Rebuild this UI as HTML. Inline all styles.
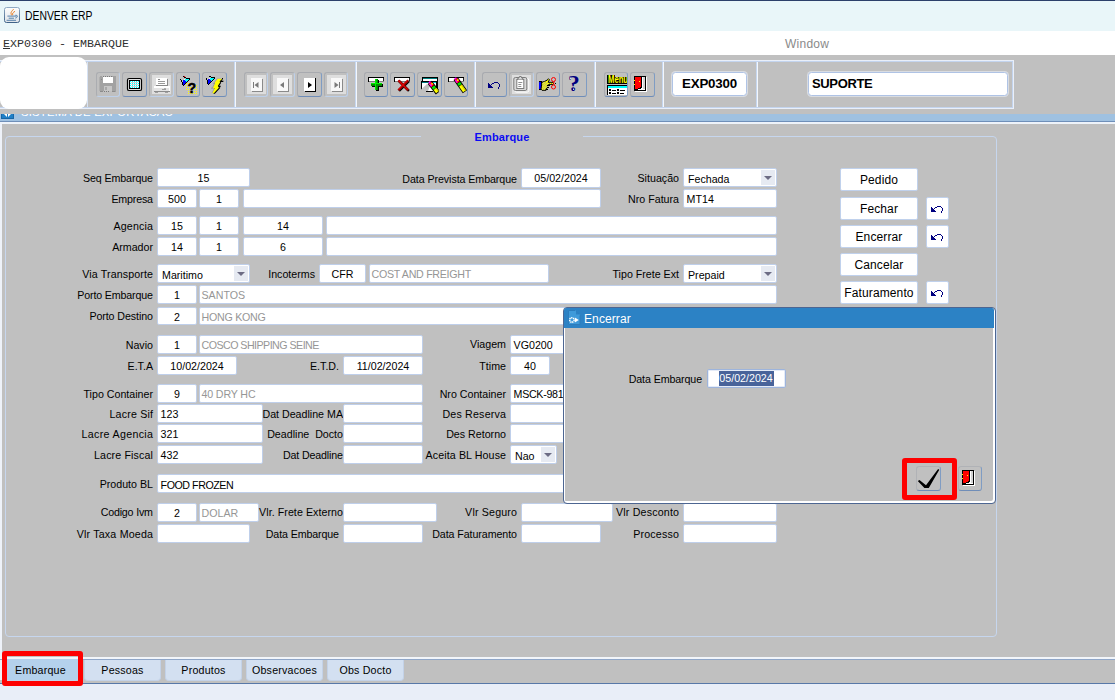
<!DOCTYPE html>
<html lang="pt-BR">
<head>
<meta charset="utf-8">
<title>DENVER ERP</title>
<style>
html,body{margin:0;padding:0}
body{width:1115px;height:700px;overflow:hidden;position:relative;background:#c0c0c0;font-family:"Liberation Sans",Arial,sans-serif;font-size:10.67px;color:#000}
div,span{box-sizing:border-box}
svg{display:block}
/* title + menu */
.titlebar{position:absolute;left:0;top:0;width:1115px;height:31px;background:#e9f6f9}
.tline{position:absolute;left:0;top:0;width:1115px;height:1px;background:#2c406b}
.jico{position:absolute;left:4px;top:7px}
.ttext{position:absolute;left:25px;top:9px;font-size:12px;line-height:15px;white-space:nowrap;display:inline-block;transform-origin:0 0;transform:scaleX(0.865)}
.menubar{position:absolute;left:0;top:31px;width:1115px;height:24px;background:#fff}
.mtext{position:absolute;left:3px;top:6px;font-family:"Liberation Mono","Courier New",monospace;font-size:11.67px;line-height:14px;white-space:nowrap;color:#303030}
.mtext{display:inline-block}
.mtext::first-letter{text-decoration:underline}
.mwin{position:absolute;left:785px;top:6px;font-size:12px;line-height:15px;color:#8a8a8a;letter-spacing:0.25px}
/* toolbar */
.toolbar{position:absolute;left:0;top:55px;width:1115px;height:59px}
.tbframe{position:absolute;left:-2px;top:6px;width:1015px;height:47px;border:1px solid #c3d4ee;box-shadow:0 0 0 1px #e9eff9}
.tbsep{position:absolute;top:7px;width:2px;height:45px;background:linear-gradient(to right,#c6d7f0 50%,#f3f7fc 50%)}
.tbl{position:absolute;left:87px;top:7px;width:1px;height:45px;background:#d6e2f4}
.blob{position:absolute;left:0;top:2px;width:87px;height:52px;background:#fff;border-radius:9px}
.tb{position:absolute;top:17px;width:24px;height:25px;border:1px solid;border-color:#a8aaaf #7f9cc3 #6f8db8 #a8aaaf;border-radius:3px}
.tb.dis{border-color:#abadb1 #bdd0ea #bdd0ea #abadb1}
.tb svg{position:absolute;left:2px;top:2px}
.tbfield{position:absolute;top:17px;height:24px;background:#fff;border:1px solid #afc3e5;border-radius:3.5px;box-shadow:0 0 0 1px rgba(236,242,251,0.55);white-space:nowrap;overflow:hidden}
.b1{font-weight:bold;font-size:13.33px;line-height:22px;letter-spacing:-0.2px}
.b2{font-weight:bold;font-size:13px;line-height:22px;padding-left:3px;letter-spacing:-0.35px}
/* mdi */
.mdistrip{position:absolute;left:0;top:114px;width:1115px;height:7px;background:#9fc1e1;overflow:hidden}
.mdiicon{position:absolute;left:1px;top:-8px}
.mditext{position:absolute;left:21px;top:-9px;color:#fff;font-size:11.3px;line-height:14px;white-space:nowrap;letter-spacing:0.2px}
.mdiline1{position:absolute;left:0;top:121px;width:1115px;height:1px;background:#6f8fb9}
.mdiline2{position:absolute;left:0;top:122px;width:1115px;height:2px;background:#eef3fa}
.leftedge{position:absolute;left:0;top:124px;width:2px;height:556px;background:#eef2f9}
/* frame */
.frame{position:absolute;left:5px;top:136px;width:992px;height:501px;border:1px solid #c6d6ee;border-radius:4px}
.framegap{position:absolute;left:421px;top:136px;width:162px;height:1px;background:#c0c0c0}
.legend{position:absolute;left:421px;top:130px;width:162px;text-align:center;color:#0a0af2;font-weight:bold;font-size:11px;line-height:14px;letter-spacing:0.15px}
/* form */
.l{position:absolute;left:0;text-align:right;height:19px;line-height:19px;padding-top:1px;white-space:nowrap}
.f{position:absolute;height:19px;background:#fff;border:1px solid #bfcfea;border-radius:2px;text-align:center;line-height:17px;padding-top:1px;white-space:nowrap;overflow:hidden}
.f.fl{text-align:left;padding-left:2.6px}
.f.fg{color:#969696;padding-left:1.5px}
.dd .ddt{position:absolute;left:4px;top:2px}
.dd .dda{position:absolute;right:1px;top:1px;width:14px;height:15px;background:#e6eaf2}
.dd .dda i{position:absolute;left:3px;top:6px;width:0;height:0;border-left:4px solid transparent;border-right:4px solid transparent;border-top:4px solid #6c6c84}
.btn{position:absolute;width:78px;height:23px;background:#fff;border:1px solid #c0d1ec;border-radius:2px;text-align:center;font-size:12px;line-height:23px;letter-spacing:0.12px;white-space:nowrap}
.ubtn{position:absolute;width:23px;height:23px;background:#fff;border:1px solid #c0d1ec;border-radius:2px}
.ubtn svg{position:absolute;left:3px;top:5px}
/* dialog */
.dlg{position:absolute;left:563px;top:307px;width:433px;height:197px;background:#c0c0c0;border:1px solid #4d6692;border-radius:4px;box-shadow:inset -1px -1px 0 1px #fff, inset 1px 0 0 0 #fff}
.dtitle{position:absolute;left:0;top:0;width:430px;height:20px;background:#2c82c5;border-radius:2px 2px 0 0}
.dicon{position:absolute;left:4px;top:2px}
.dtt{position:absolute;left:20px;top:4px;color:#fff;font-size:12px;line-height:15px;letter-spacing:0.1px}
.dl{position:absolute;left:0;top:61px;width:138px;text-align:right;height:19px;line-height:19px;padding-top:1px;white-space:nowrap;letter-spacing:-0.1px}
.dfield{left:143px;top:61px;width:79px;height:19px;border-color:#9db4dc;padding-top:0;box-shadow:inset 0 0 0 1px #e4ebf7}
.sel{display:inline-block;background:#48639a;color:#fff;height:15px;line-height:15px;margin-top:1px;vertical-align:top;padding:0 1px 0 0}
.db{position:absolute;top:158px;width:24px;height:25px;border:1px solid;border-color:#b0b2b6 #7f9cc3 #6f8db8 #b0b2b6;border-radius:3px}
.db svg{position:absolute;left:2px;top:2px}
.red{position:absolute;border:5px solid #fe0000;border-radius:3px;box-sizing:content-box}
/* tabs */
.tabwhite{position:absolute;left:0;top:657px;width:1115px;height:3px;background:#f2f5fa;border-bottom:1px solid #8fa6c8}
.tabline{position:absolute;left:0;top:683px;width:1115px;height:1px;background:#5878a8}
.status{position:absolute;left:0;top:684px;width:1115px;height:16px;background:#e9eef8}
.tab{position:absolute;top:660px;width:77px;height:21px;background:#d3e0f1;border-radius:0 0 4px 4px;text-align:center;line-height:21px;letter-spacing:0.2px;border:1px solid #c3d2e8;border-top:none}
.tab.tsel{background:#b4d1ec;top:659px;height:22px;line-height:23px}
</style>
</head>
<body>
<div class="titlebar"><div class="tline"></div><svg class="jico" width="16" height="16" viewBox="0 0 16 16"><defs><linearGradient id="jg" x1="0" y1="0" x2="0" y2="1"><stop offset="0" stop-color="#fdfdfd"/><stop offset="1" stop-color="#dde2e8"/></linearGradient><linearGradient id="jb" x1="0" y1="0" x2="0" y2="1"><stop offset="0" stop-color="#8fa9c4"/><stop offset="1" stop-color="#3f6288"/></linearGradient></defs><rect x="0.5" y="0.5" width="15" height="15" rx="2" fill="url(#jg)" stroke="url(#jb)"/><path d="M9.4 2.4C7.6 4.4 5.9 5.8 7.7 8.2M10.7 4.5C9 5.5 8.1 6.4 8.6 7.6" fill="none" stroke="#e87a1c" stroke-width="0.95" stroke-linecap="round"/><path d="M3.8 9.1h8.4M5.1 11.2h4.5M3 13.3h8.6" fill="none" stroke="#4f7ca8" stroke-width="0.95" stroke-linecap="round"/><path d="M11.4 8.2c2.6-0.4 2.8 2.2-0.1 2.9" fill="none" stroke="#4f7ca8" stroke-width="0.95"/></svg><span class="ttext">DENVER ERP</span></div>
<div class="menubar"><span class="mtext">EXP0300 - EMBARQUE</span><span class="mwin">Window</span></div>
<div class="toolbar">
<div class="tbframe"></div>
<div class="tbsep" style="left:234px"></div>
<div class="tbsep" style="left:355px"></div>
<div class="tbsep" style="left:474px"></div>
<div class="tbsep" style="left:594px"></div>
<div class="tbsep" style="left:662px"></div>
<div class="tbsep" style="left:756px"></div>
<div class="tbl"></div><div class="blob"></div>
<div class="tb dis" style="left:96px;width:24px"><svg width="19" height="20" viewBox="0 0 19 20" shape-rendering="crispEdges"><rect x="1" y="1" width="16" height="16" fill="#a2a2a2"/><rect x="0" y="2" width="1" height="14" fill="#b0b0b0"/><rect x="4" y="2" width="10" height="6" fill="#fff"/><rect x="5" y="11" width="8" height="6" fill="#c6c6c6"/><rect x="6" y="12" width="2" height="3" fill="#a8a8a8"/><rect x="4" y="1" width="1" height="1" fill="#7c7c7c"/><rect x="6" y="1" width="1" height="1" fill="#7c7c7c"/><rect x="8" y="1" width="1" height="1" fill="#7c7c7c"/><rect x="10" y="1" width="1" height="1" fill="#7c7c7c"/><rect x="12" y="1" width="1" height="1" fill="#7c7c7c"/><rect x="3" y="1" width="1" height="1" fill="#c0c0c0"/><rect x="5" y="1" width="1" height="1" fill="#c0c0c0"/><rect x="7" y="1" width="1" height="1" fill="#c0c0c0"/><rect x="9" y="1" width="1" height="1" fill="#c0c0c0"/><rect x="11" y="1" width="1" height="1" fill="#c0c0c0"/><rect x="1" y="16" width="3" height="1" fill="#8c8c8c"/><rect x="13" y="16" width="3" height="1" fill="#8c8c8c"/><rect x="5" y="16" width="1" height="1" fill="#7c7c7c"/><rect x="7" y="16" width="1" height="1" fill="#7c7c7c"/><rect x="9" y="16" width="1" height="1" fill="#7c7c7c"/><rect x="4" y="16" width="1" height="1" fill="#c0c0c0"/><rect x="6" y="16" width="1" height="1" fill="#c0c0c0"/><rect x="8" y="16" width="1" height="1" fill="#c0c0c0"/><rect x="10" y="16" width="1" height="1" fill="#c0c0c0"/><rect x="11" y="16" width="1" height="1" fill="#c0c0c0"/><rect x="12" y="16" width="1" height="1" fill="#c0c0c0"/><rect x="2" y="4" width="1" height="1" fill="#888"/></svg></div>
<div class="tb " style="left:122px;width:25px"><svg width="19" height="20" viewBox="0 0 19 20" shape-rendering="crispEdges"><rect shape-rendering="auto" x="2.5" y="3.5" width="14" height="12" rx="1.6" fill="#e4e4e4" stroke="#000" stroke-width="1.2"/><rect x="4" y="5" width="11" height="9" fill="#000"/><rect x="5" y="6" width="1" height="1" fill="#00ffff"/><rect x="6" y="6" width="1" height="1" fill="#f0ffff"/><rect x="7" y="6" width="1" height="1" fill="#00ffff"/><rect x="8" y="6" width="1" height="1" fill="#f0ffff"/><rect x="9" y="6" width="1" height="1" fill="#00ffff"/><rect x="10" y="6" width="1" height="1" fill="#f0ffff"/><rect x="11" y="6" width="1" height="1" fill="#00ffff"/><rect x="12" y="6" width="1" height="1" fill="#f0ffff"/><rect x="13" y="6" width="1" height="1" fill="#00ffff"/><rect x="5" y="7" width="1" height="1" fill="#f0ffff"/><rect x="6" y="7" width="1" height="1" fill="#00ffff"/><rect x="7" y="7" width="1" height="1" fill="#f0ffff"/><rect x="8" y="7" width="1" height="1" fill="#00ffff"/><rect x="9" y="7" width="1" height="1" fill="#f0ffff"/><rect x="10" y="7" width="1" height="1" fill="#00ffff"/><rect x="11" y="7" width="1" height="1" fill="#f0ffff"/><rect x="12" y="7" width="1" height="1" fill="#00ffff"/><rect x="13" y="7" width="1" height="1" fill="#f0ffff"/><rect x="5" y="8" width="1" height="1" fill="#00ffff"/><rect x="6" y="8" width="1" height="1" fill="#f0ffff"/><rect x="7" y="8" width="1" height="1" fill="#00ffff"/><rect x="8" y="8" width="1" height="1" fill="#f0ffff"/><rect x="9" y="8" width="1" height="1" fill="#00ffff"/><rect x="10" y="8" width="1" height="1" fill="#f0ffff"/><rect x="11" y="8" width="1" height="1" fill="#00ffff"/><rect x="12" y="8" width="1" height="1" fill="#f0ffff"/><rect x="13" y="8" width="1" height="1" fill="#00ffff"/><rect x="5" y="9" width="1" height="1" fill="#f0ffff"/><rect x="6" y="9" width="1" height="1" fill="#00ffff"/><rect x="7" y="9" width="1" height="1" fill="#f0ffff"/><rect x="8" y="9" width="1" height="1" fill="#00ffff"/><rect x="9" y="9" width="1" height="1" fill="#f0ffff"/><rect x="10" y="9" width="1" height="1" fill="#00ffff"/><rect x="11" y="9" width="1" height="1" fill="#f0ffff"/><rect x="12" y="9" width="1" height="1" fill="#00ffff"/><rect x="13" y="9" width="1" height="1" fill="#f0ffff"/><rect x="5" y="10" width="1" height="1" fill="#00ffff"/><rect x="6" y="10" width="1" height="1" fill="#f0ffff"/><rect x="7" y="10" width="1" height="1" fill="#00ffff"/><rect x="8" y="10" width="1" height="1" fill="#f0ffff"/><rect x="9" y="10" width="1" height="1" fill="#00ffff"/><rect x="10" y="10" width="1" height="1" fill="#f0ffff"/><rect x="11" y="10" width="1" height="1" fill="#00ffff"/><rect x="12" y="10" width="1" height="1" fill="#f0ffff"/><rect x="13" y="10" width="1" height="1" fill="#00ffff"/><rect x="5" y="11" width="1" height="1" fill="#f0ffff"/><rect x="6" y="11" width="1" height="1" fill="#00ffff"/><rect x="7" y="11" width="1" height="1" fill="#f0ffff"/><rect x="8" y="11" width="1" height="1" fill="#00ffff"/><rect x="9" y="11" width="1" height="1" fill="#f0ffff"/><rect x="10" y="11" width="1" height="1" fill="#00ffff"/><rect x="11" y="11" width="1" height="1" fill="#f0ffff"/><rect x="12" y="11" width="1" height="1" fill="#00ffff"/><rect x="13" y="11" width="1" height="1" fill="#f0ffff"/><rect x="5" y="12" width="1" height="1" fill="#00ffff"/><rect x="6" y="12" width="1" height="1" fill="#f0ffff"/><rect x="7" y="12" width="1" height="1" fill="#00ffff"/><rect x="8" y="12" width="1" height="1" fill="#f0ffff"/><rect x="9" y="12" width="1" height="1" fill="#00ffff"/><rect x="10" y="12" width="1" height="1" fill="#f0ffff"/><rect x="11" y="12" width="1" height="1" fill="#00ffff"/><rect x="12" y="12" width="1" height="1" fill="#f0ffff"/><rect x="13" y="12" width="1" height="1" fill="#00ffff"/><rect x="6" y="7" width="7" height="1" fill="#d4d4d4"/><rect x="6" y="9" width="7" height="1" fill="#d4d4d4"/><rect x="6" y="11" width="7" height="1" fill="#d4d4d4"/></svg></div>
<div class="tb dis" style="left:149px;width:25px"><svg width="19" height="20" viewBox="0 0 19 20" shape-rendering="crispEdges"><rect x="0" y="0" width="19" height="19" fill="#dedede"/><rect x="4" y="3" width="11" height="7" fill="#fff"/><rect x="15" y="4" width="1" height="7" fill="#8a8a8a"/><rect x="4" y="10" width="12" height="1" fill="#8a8a8a"/><rect x="6" y="4" width="2" height="1" fill="#8a8a8a"/><rect x="6" y="6" width="7" height="1" fill="#9a9a9a"/><rect x="6" y="8" width="7" height="1" fill="#9a9a9a"/><rect x="2" y="11" width="16" height="2" fill="#fff"/><rect x="2" y="13" width="15" height="3" fill="#e4e4e4"/><rect x="17" y="12" width="1" height="4" fill="#fff"/><rect x="10" y="14" width="4" height="1" fill="#9c9c9c"/><rect x="12" y="13" width="2" height="1" fill="#b0b0b0"/><rect x="2" y="16" width="16" height="1" fill="#8c8c8c"/><rect x="3" y="17" width="3" height="1" fill="#a0a0a0"/><rect x="13" y="17" width="3" height="1" fill="#a0a0a0"/></svg></div>
<div class="tb " style="left:176px;width:24px"><svg width="19" height="20" viewBox="0 0 19 20" shape-rendering="crispEdges"><rect x="7" y="8" width="1" height="1" fill="#ffff00"/><rect x="9" y="8" width="1" height="1" fill="#ffff00"/><rect x="7" y="10" width="1" height="1" fill="#ffff00"/><rect x="17" y="10" width="1" height="1" fill="#ffff00"/><rect x="7" y="12" width="1" height="1" fill="#ffff00"/><rect x="9" y="12" width="1" height="1" fill="#ffff00"/><rect x="11" y="12" width="1" height="1" fill="#ffff00"/><rect x="15" y="12" width="1" height="1" fill="#ffff00"/><rect x="17" y="12" width="1" height="1" fill="#ffff00"/><rect x="7" y="14" width="1" height="1" fill="#ffff00"/><rect x="9" y="14" width="1" height="1" fill="#ffff00"/><rect x="15" y="14" width="1" height="1" fill="#ffff00"/><rect x="17" y="14" width="1" height="1" fill="#ffff00"/><rect x="9" y="16" width="1" height="1" fill="#ffff00"/><rect x="15" y="16" width="1" height="1" fill="#ffff00"/><rect x="17" y="16" width="1" height="1" fill="#ffff00"/><rect x="9" y="18" width="1" height="1" fill="#ffff00"/><rect x="11" y="18" width="1" height="1" fill="#ffff00"/><rect x="13" y="18" width="1" height="1" fill="#ffff00"/><rect x="15" y="18" width="1" height="1" fill="#ffff00"/><rect x="17" y="18" width="1" height="1" fill="#ffff00"/><rect x="4" y="1" width="1" height="1" fill="#000"/><rect x="5" y="1" width="1" height="1" fill="#ff0000"/><rect x="5" y="2" width="2" height="1" fill="#000"/><rect x="7" y="3" width="4" height="1" fill="#000"/><rect x="1" y="4" width="1" height="1" fill="#000"/><rect x="5" y="4" width="1" height="1" fill="#f4f4f4"/><rect x="6" y="4" width="4" height="1" fill="#00ffff"/><rect x="10" y="4" width="1" height="1" fill="#000"/><rect x="2" y="5" width="1" height="1" fill="#000"/><rect x="4" y="5" width="2" height="1" fill="#0000ff"/><rect x="6" y="5" width="3" height="1" fill="#00ffff"/><rect x="9" y="5" width="1" height="1" fill="#000"/><rect x="2" y="6" width="1" height="1" fill="#000"/><rect x="4" y="6" width="3" height="1" fill="#0000ff"/><rect x="7" y="6" width="1" height="1" fill="#00ffff"/><rect x="8" y="6" width="1" height="1" fill="#000"/><rect x="3" y="7" width="1" height="1" fill="#000"/><rect x="4" y="7" width="3" height="1" fill="#0000ff"/><rect x="7" y="7" width="1" height="1" fill="#000"/><rect x="3" y="8" width="1" height="1" fill="#000"/><rect x="4" y="8" width="2" height="1" fill="#0000ff"/><rect x="6" y="8" width="1" height="1" fill="#000"/><rect x="3" y="9" width="1" height="1" fill="#000"/><rect x="4" y="9" width="1" height="1" fill="#0000ff"/><rect x="5" y="9" width="1" height="1" fill="#000"/><rect x="4" y="10" width="1" height="1" fill="#000"/><text shape-rendering="auto" x="8.6" y="18" font-family="Liberation Sans,Arial,sans-serif" font-weight="bold" font-size="14.2" fill="#000" stroke="#000" stroke-width="0.45">?</text></svg></div>
<div class="tb " style="left:202px;width:25px"><svg width="19" height="20" viewBox="0 0 19 20" shape-rendering="crispEdges"><g transform="translate(1,0)"><rect x="3" y="1" width="2" height="1" fill="#000"/><rect x="5" y="2" width="4" height="1" fill="#000"/><rect x="0" y="3" width="1" height="1" fill="#000"/><rect x="3" y="3" width="1" height="1" fill="#f4f4f4"/><rect x="4" y="3" width="4" height="1" fill="#00ffff"/><rect x="8" y="3" width="1" height="1" fill="#000"/><rect x="0" y="4" width="1" height="1" fill="#000"/><rect x="2" y="4" width="2" height="1" fill="#0000ff"/><rect x="4" y="4" width="3" height="1" fill="#00ffff"/><rect x="7" y="4" width="1" height="1" fill="#000"/><rect x="1" y="5" width="1" height="1" fill="#000"/><rect x="2" y="5" width="3" height="1" fill="#0000ff"/><rect x="5" y="5" width="1" height="1" fill="#00ffff"/><rect x="6" y="5" width="1" height="1" fill="#000"/><rect x="1" y="6" width="1" height="1" fill="#000"/><rect x="2" y="6" width="3" height="1" fill="#0000ff"/><rect x="5" y="6" width="1" height="1" fill="#000"/><rect x="1" y="7" width="1" height="1" fill="#000"/><rect x="2" y="7" width="2" height="1" fill="#0000ff"/><rect x="4" y="7" width="1" height="1" fill="#000"/><rect x="1" y="8" width="1" height="1" fill="#000"/><rect x="2" y="8" width="1" height="1" fill="#0000ff"/><rect x="3" y="8" width="1" height="1" fill="#000"/><rect x="2" y="9" width="1" height="1" fill="#000"/><g shape-rendering="auto"><polygon points="11.7,3.7 16.0,3.7 13.6,6.4 14.2,7.2 11.8,11.0 13.2,12.6 7.9,18.3 6.3,18.3 8.7,13.6 6.9,13.0 9.1,8.2 8.6,7.6" fill="#9a9aa8" transform="translate(-0.8,-0.2)"/><polygon points="11.7,3.7 16.0,3.7 13.6,6.4 14.2,7.2 11.8,11.0 13.2,12.6 7.9,18.3 6.3,18.3 8.7,13.6 6.9,13.0 9.1,8.2 8.6,7.6" fill="#000" transform="translate(1,0.5)"/><polygon points="11.7,3.7 16.0,3.7 13.6,6.4 14.2,7.2 11.8,11.0 13.2,12.6 7.9,18.3 6.3,18.3 8.7,13.6 6.9,13.0 9.1,8.2 8.6,7.6" fill="#ffff00"/><path d="M6.9 8.4h2.1M5 13.2h2.2" stroke="#909090" stroke-width="0.8"/><path d="M14 7h3.2l0.4-1.2h-2.6zM12.2 12.2h2.2l0.4-1.4h-1.8z" fill="#000"/></g><rect x="16" y="3" width="1" height="1" fill="#000"/></g></svg></div>
<div class="tb dis" style="left:244px;width:24px"><svg width="19" height="20" viewBox="0 0 19 20" shape-rendering="crispEdges"><rect x="0" y="0" width="19" height="19" fill="#dedede"/><rect x="4" y="3" width="11" height="13" fill="#f8f8f8"/><rect x="15" y="4" width="1" height="13" fill="#8a8a8a"/><rect x="5" y="16" width="11" height="1" fill="#8a8a8a"/><rect x="6" y="7" width="1" height="6" fill="#7a7a7a"/><path d="M11.5 7v6l-4-3z" fill="#7a7a7a" shape-rendering="auto"/></svg></div>
<div class="tb dis" style="left:270px;width:25px"><svg width="19" height="20" viewBox="0 0 19 20" shape-rendering="crispEdges"><rect x="0" y="0" width="19" height="19" fill="#dedede"/><rect x="4" y="3" width="11" height="13" fill="#f8f8f8"/><rect x="15" y="4" width="1" height="13" fill="#8a8a8a"/><rect x="5" y="16" width="11" height="1" fill="#8a8a8a"/><path d="M11 7v6l-4-3z" fill="#7a7a7a" shape-rendering="auto"/></svg></div>
<div class="tb " style="left:297px;width:25px"><svg width="19" height="20" viewBox="0 0 19 20" shape-rendering="crispEdges"><rect x="4" y="3" width="11" height="13" fill="#fff"/><rect x="15" y="4" width="1" height="13" fill="#000"/><rect x="5" y="16" width="11" height="1" fill="#000"/><rect x="15" y="3" width="1" height="1" fill="#000"/><path d="M8 7v6l4-3z" fill="#000" shape-rendering="auto"/></svg></div>
<div class="tb dis" style="left:324px;width:24px"><svg width="19" height="20" viewBox="0 0 19 20" shape-rendering="crispEdges"><rect x="0" y="0" width="19" height="19" fill="#dedede"/><rect x="4" y="3" width="11" height="13" fill="#f8f8f8"/><rect x="15" y="4" width="1" height="13" fill="#8a8a8a"/><rect x="5" y="16" width="11" height="1" fill="#8a8a8a"/><path d="M7.5 7v6l4-3z" fill="#7a7a7a" shape-rendering="auto"/><rect x="12" y="7" width="1" height="6" fill="#7a7a7a"/></svg></div>
<div class="tb " style="left:364px;width:24px"><svg width="19" height="20" viewBox="0 0 19 20" shape-rendering="crispEdges"><rect x="1" y="2" width="16" height="1" fill="#000"/><rect x="1" y="2" width="1" height="5" fill="#000"/><rect x="16" y="3" width="1" height="3" fill="#202020"/><rect x="2" y="3" width="14" height="3" fill="#fff"/><rect x="2" y="6" width="15" height="1" fill="#808080"/><rect x="9" y="5" width="3" height="11" fill="#000"/><rect x="5" y="9" width="11" height="3" fill="#000"/><rect x="8" y="4" width="3" height="11" fill="#008c00"/><rect x="4" y="8" width="11" height="3" fill="#008c00"/><rect x="8" y="4" width="1" height="11" fill="#00f000"/><rect x="4" y="8" width="11" height="1" fill="#00f000"/><rect x="9" y="4" width="1" height="4" fill="#00c000"/><rect x="9" y="11" width="1" height="4" fill="#00a000"/></svg></div>
<div class="tb " style="left:390px;width:25px"><svg width="19" height="20" viewBox="0 0 19 20" shape-rendering="crispEdges"><rect x="1" y="2" width="16" height="1" fill="#000"/><rect x="1" y="2" width="1" height="5" fill="#000"/><rect x="16" y="3" width="1" height="3" fill="#202020"/><rect x="2" y="3" width="14" height="3" fill="#fff"/><rect x="2" y="6" width="15" height="1" fill="#808080"/><g shape-rendering="auto" fill="none" stroke-linecap="square"><path d="M6.9 6.9l8.2 8.2M15.1 6.9l-8.2 8.2" stroke="#000" stroke-width="2.4"/><path d="M6.2 6.2l8.2 8.2M14.4 6.2l-8.2 8.2" stroke="#a00000" stroke-width="2.4"/><path d="M5.8 5.9l8.2 8.2M14 5.9l-8.2 8.2" stroke="#f00000" stroke-width="0.9"/></g></svg></div>
<div class="tb " style="left:417px;width:25px"><svg width="19" height="20" viewBox="0 0 19 20" shape-rendering="crispEdges"><rect x="2" y="2" width="16" height="15" fill="#000"/><rect x="3" y="3" width="14" height="13" fill="#fff"/><rect x="3" y="3" width="14" height="1" fill="#008080"/><rect x="1" y="6" width="15" height="10" fill="#000"/><rect x="2" y="7" width="14" height="9" fill="#fff"/><rect x="2" y="7" width="8" height="1" fill="#008080"/><rect x="10" y="7" width="6" height="1" fill="#00d8d8"/><rect x="16" y="6" width="1" height="10" fill="#000"/><path d="M1 16l0-1.4l6-5.6l3 2l-2 5z" fill="#c0c0c0" shape-rendering="auto"/><rect x="1" y="15" width="6" height="1" fill="#c0c0c0"/><rect x="1" y="16" width="17" height="1" fill="#c0c0c0"/><rect x="13" y="15" width="5" height="1" fill="#c0c0c0"/><rect x="6" y="16" width="7" height="1" fill="#000"/><g shape-rendering="auto" transform="translate(9.4,6.9) rotate(52)"><rect x="0.6" y="-2.6" width="13.2" height="5.2" fill="#000"/><rect x="-0.4" y="-1.1" width="1.8" height="2.2" fill="#ff00ff"/><rect x="1.2" y="-1.7" width="4.2" height="3.4" fill="#ff0000"/><rect x="2.4" y="-1.7" width="1.5" height="1.7" fill="#ffff00"/><rect x="1.6" y="0.2" width="3.2" height="1.5" fill="#ff00ff"/><rect x="5.8" y="-1.7" width="2.7" height="3.4" fill="#00e800"/><rect x="9" y="-1.7" width="4.0" height="3.4" fill="#ffff00"/><rect x="9" y="-1.7" width="4.0" height="1.1" fill="#d0d000"/></g></svg></div>
<div class="tb " style="left:444px;width:24px"><svg width="21" height="21" viewBox="0 0 21 21" shape-rendering="crispEdges"><rect x="1" y="2" width="16" height="1" fill="#000"/><rect x="1" y="2" width="1" height="5" fill="#000"/><rect x="16" y="3" width="1" height="3" fill="#202020"/><rect x="2" y="3" width="14" height="3" fill="#fff"/><rect x="2" y="6" width="15" height="1" fill="#808080"/><g shape-rendering="auto" transform="translate(8.3,3.1) rotate(55)"><rect x="0.6" y="-2.6" width="16.200000000000003" height="5.2" fill="#000"/><rect x="-0.4" y="-1.1" width="1.8" height="2.2" fill="#ff00ff"/><rect x="1.2" y="-1.7" width="4.2" height="3.4" fill="#ff0000"/><rect x="2.4" y="-1.7" width="1.5" height="1.7" fill="#ffff00"/><rect x="1.6" y="0.2" width="3.2" height="1.5" fill="#ff00ff"/><rect x="5.8" y="-1.7" width="2.7" height="3.4" fill="#00e800"/><rect x="9" y="-1.7" width="7.000000000000002" height="3.4" fill="#ffff00"/><rect x="9" y="-1.7" width="7.000000000000002" height="1.1" fill="#d0d000"/></g></svg></div>
<div class="tb " style="left:482px;width:25px"><svg width="19" height="20" viewBox="0 0 19 20" shape-rendering="crispEdges"><rect x="9" y="7" width="4" height="1" fill="#000080"/><rect x="3" y="8" width="1" height="1" fill="#000080"/><rect x="7" y="8" width="2" height="1" fill="#000080"/><rect x="13" y="8" width="1" height="1" fill="#000080"/><rect x="3" y="9" width="2" height="1" fill="#000080"/><rect x="6" y="9" width="1" height="1" fill="#000080"/><rect x="14" y="9" width="1" height="1" fill="#000080"/><rect x="3" y="10" width="3" height="1" fill="#000080"/><rect x="14" y="10" width="1" height="1" fill="#000080"/><rect x="3" y="11" width="4" height="1" fill="#000080"/><rect x="14" y="11" width="1" height="1" fill="#000080"/><rect x="3" y="12" width="5" height="1" fill="#000080"/><rect x="13" y="12" width="1" height="1" fill="#000080"/><rect x="13" y="13" width="1" height="1" fill="#000080"/></svg></div>
<div class="tb dis" style="left:509px;width:25px"><svg width="19" height="20" viewBox="0 0 19 20" shape-rendering="crispEdges"><rect x="0" y="0" width="19" height="19" fill="#dedede"/><g shape-rendering="auto" transform="translate(-0.7,-1)"><rect x="2.5" y="3.5" width="14" height="13.6" rx="1.6" fill="none" stroke="#fff" stroke-width="1" transform="translate(1,1)"/><rect x="2.5" y="3.5" width="13" height="13" rx="1.6" fill="#d8d8d8" stroke="#7c7c7c" stroke-width="1"/><rect x="5.5" y="5.5" width="7" height="9" fill="#fff" stroke="#7c7c7c" stroke-width="1"/><path d="M6.6 5.4v-1.4h1l0.5-1.5h1.8l0.5 1.5h1v1.4" fill="#d8d8d8" stroke="#7c7c7c" stroke-width="1"/><path d="M7 8.5h4M7 10.5h3M7 12.5h3" stroke="#909090" stroke-width="1"/></g></svg></div>
<div class="tb " style="left:536px;width:24px"><svg width="19" height="20" viewBox="0 0 19 20" shape-rendering="crispEdges"><g shape-rendering="auto"><circle cx="14.5" cy="4.5" r="2" fill="none" stroke="#ff0000" stroke-width="1"/><circle cx="14.5" cy="12" r="2" fill="none" stroke="#ff0000" stroke-width="1"/><path d="M13.4 6.4l2.2 3.8M15.6 6.4l-2.2 3.8" stroke="#ff0000" stroke-width="0.9" fill="none"/></g><rect x="0" y="6" width="3" height="9" fill="#000"/><rect x="0" y="7" width="2" height="7" fill="#0000ff"/><path shape-rendering="auto" d="M3 7.2l2.6-0.8l2.4-1.2l1.5-1.4l0.9 0.9l-1.2 2.6h4.6v2.1h-4.2v1.3h-1.1v1.5h-0.8v1.5h-0.7v1.6h-4l-1-1.2z" fill="#ffff00" stroke="#000" stroke-width="1"/><rect x="4" y="7" width="1" height="1" fill="#b8b870"/><rect x="6" y="7" width="1" height="1" fill="#b8b870"/><rect x="8" y="7" width="1" height="1" fill="#b8b870"/><rect x="3" y="8" width="1" height="1" fill="#b8b870"/><rect x="5" y="8" width="1" height="1" fill="#b8b870"/><rect x="7" y="8" width="1" height="1" fill="#b8b870"/><rect x="4" y="9" width="1" height="1" fill="#b8b870"/><rect x="6" y="9" width="1" height="1" fill="#b8b870"/><rect x="8" y="9" width="1" height="1" fill="#b8b870"/><rect x="3" y="10" width="1" height="1" fill="#b8b870"/><rect x="5" y="10" width="1" height="1" fill="#b8b870"/><rect x="7" y="10" width="1" height="1" fill="#b8b870"/><rect x="4" y="11" width="1" height="1" fill="#b8b870"/><rect x="6" y="11" width="1" height="1" fill="#b8b870"/><rect x="8" y="11" width="1" height="1" fill="#b8b870"/><rect x="3" y="12" width="1" height="1" fill="#b8b870"/><rect x="5" y="12" width="1" height="1" fill="#b8b870"/><rect x="7" y="12" width="1" height="1" fill="#b8b870"/><rect x="4" y="13" width="1" height="1" fill="#b8b870"/><rect x="6" y="13" width="1" height="1" fill="#b8b870"/><rect x="8" y="13" width="1" height="1" fill="#b8b870"/><rect x="3" y="14" width="1" height="1" fill="#b8b870"/><rect x="5" y="14" width="1" height="1" fill="#b8b870"/><rect x="7" y="14" width="1" height="1" fill="#b8b870"/><rect x="9" y="8" width="5" height="1" fill="#ffff00"/><rect x="10" y="8" width="1" height="1" fill="#909040"/><rect x="12" y="8" width="1" height="1" fill="#909040"/><rect x="8" y="10" width="3" height="1" fill="#000"/><rect x="8" y="12" width="2" height="1" fill="#000"/><rect x="7" y="14" width="2" height="1" fill="#000"/><rect x="16" y="8" width="1" height="1" fill="#000"/></svg></div>
<div class="tb " style="left:562px;width:25px"><svg width="19" height="20" viewBox="0 0 19 20"><text x="3" y="16.4" font-family="Liberation Serif,Times New Roman,serif" font-weight="bold" font-size="23.5" fill="#000080">?</text><rect x="5" y="2.6" width="1.2" height="1.2" fill="#fff"/><rect x="8" y="13.6" width="1.2" height="1.2" fill="#fff"/></svg></div>
<div class="tb " style="left:604px;width:24px"><svg width="20" height="20" viewBox="0 0 20 20" shape-rendering="crispEdges"><rect x="0" y="0" width="8" height="9" fill="#000"/><rect x="8" y="2" width="12" height="7" fill="#000"/><text x="1" y="8" font-family="Liberation Sans,Arial,sans-serif" font-weight="bold" font-size="10.1" textLength="20" lengthAdjust="spacingAndGlyphs" shape-rendering="auto" fill="#ffff00">Menu</text><rect x="0" y="10" width="20" height="10" fill="#000"/><rect x="1" y="11" width="19" height="2" fill="#00ffff"/><rect x="1" y="13" width="19" height="7" fill="#fff"/><rect x="2" y="14" width="2" height="2" fill="#000"/><rect x="5" y="15" width="4" height="1" fill="#000"/><rect x="10" y="14" width="2" height="2" fill="#000"/><rect x="13" y="15" width="5" height="1" fill="#000"/><rect x="2" y="17" width="2" height="2" fill="#000"/><rect x="5" y="18" width="4" height="1" fill="#000"/><rect x="10" y="17" width="2" height="2" fill="#000"/><rect x="13" y="18" width="4" height="1" fill="#000"/></svg></div>
<div class="tb " style="left:630px;width:25px"><svg width="19" height="20" viewBox="0 0 19 20" shape-rendering="crispEdges"><rect x="1" y="1" width="12" height="1" fill="#000"/><rect x="1" y="2" width="1" height="1" fill="#000"/><rect x="2" y="2" width="6" height="1" fill="#ff0000"/><rect x="8" y="2" width="1" height="1" fill="#000"/><rect x="9" y="2" width="1" height="1" fill="#fff"/><rect x="10" y="2" width="2" height="1" fill="#d4d4d4"/><rect x="12" y="2" width="1" height="1" fill="#000"/><rect x="13" y="2" width="1" height="1" fill="#fff"/><rect x="1" y="3" width="1" height="1" fill="#000"/><rect x="2" y="3" width="6" height="1" fill="#ff0000"/><rect x="8" y="3" width="1" height="1" fill="#000"/><rect x="9" y="3" width="1" height="1" fill="#fff"/><rect x="10" y="3" width="2" height="1" fill="#d4d4d4"/><rect x="12" y="3" width="1" height="1" fill="#000"/><rect x="13" y="3" width="1" height="1" fill="#fff"/><rect x="1" y="4" width="1" height="1" fill="#000"/><rect x="2" y="4" width="6" height="1" fill="#ff0000"/><rect x="8" y="4" width="1" height="1" fill="#000"/><rect x="9" y="4" width="1" height="1" fill="#fff"/><rect x="10" y="4" width="2" height="1" fill="#d4d4d4"/><rect x="12" y="4" width="1" height="1" fill="#000"/><rect x="13" y="4" width="1" height="1" fill="#fff"/><rect x="1" y="5" width="1" height="1" fill="#ffff00"/><rect x="2" y="5" width="6" height="1" fill="#ff0000"/><rect x="8" y="5" width="1" height="1" fill="#000"/><rect x="9" y="5" width="1" height="1" fill="#fff"/><rect x="10" y="5" width="2" height="1" fill="#d4d4d4"/><rect x="12" y="5" width="1" height="1" fill="#000"/><rect x="13" y="5" width="1" height="1" fill="#fff"/><rect x="1" y="6" width="1" height="1" fill="#000"/><rect x="2" y="6" width="4" height="1" fill="#ff0000"/><rect x="6" y="6" width="1" height="1" fill="#ffff00"/><rect x="7" y="6" width="1" height="1" fill="#ff0000"/><rect x="8" y="6" width="1" height="1" fill="#000"/><rect x="9" y="6" width="1" height="1" fill="#fff"/><rect x="10" y="6" width="2" height="1" fill="#d4d4d4"/><rect x="12" y="6" width="1" height="1" fill="#000"/><rect x="13" y="6" width="1" height="1" fill="#fff"/><rect x="1" y="7" width="1" height="1" fill="#000"/><rect x="2" y="7" width="6" height="1" fill="#ff0000"/><rect x="8" y="7" width="1" height="1" fill="#000"/><rect x="9" y="7" width="1" height="1" fill="#fff"/><rect x="10" y="7" width="2" height="1" fill="#d4d4d4"/><rect x="12" y="7" width="1" height="1" fill="#000"/><rect x="13" y="7" width="1" height="1" fill="#fff"/><rect x="1" y="8" width="1" height="1" fill="#000"/><rect x="2" y="8" width="6" height="1" fill="#ff0000"/><rect x="8" y="8" width="1" height="1" fill="#000"/><rect x="9" y="8" width="1" height="1" fill="#fff"/><rect x="10" y="8" width="2" height="1" fill="#d4d4d4"/><rect x="12" y="8" width="1" height="1" fill="#000"/><rect x="13" y="8" width="1" height="1" fill="#fff"/><rect x="1" y="9" width="1" height="1" fill="#ffff00"/><rect x="2" y="9" width="6" height="1" fill="#ff0000"/><rect x="8" y="9" width="1" height="1" fill="#000"/><rect x="9" y="9" width="1" height="1" fill="#fff"/><rect x="10" y="9" width="2" height="1" fill="#d4d4d4"/><rect x="12" y="9" width="1" height="1" fill="#000"/><rect x="13" y="9" width="1" height="1" fill="#fff"/><rect x="1" y="10" width="1" height="1" fill="#000"/><rect x="2" y="10" width="6" height="1" fill="#ff0000"/><rect x="8" y="10" width="1" height="1" fill="#000"/><rect x="9" y="10" width="1" height="1" fill="#fff"/><rect x="10" y="10" width="2" height="1" fill="#d4d4d4"/><rect x="12" y="10" width="1" height="1" fill="#000"/><rect x="13" y="10" width="1" height="1" fill="#fff"/><rect x="1" y="11" width="1" height="1" fill="#000"/><rect x="2" y="11" width="6" height="1" fill="#ff0000"/><rect x="8" y="11" width="1" height="1" fill="#000"/><rect x="9" y="11" width="1" height="1" fill="#fff"/><rect x="10" y="11" width="2" height="1" fill="#d4d4d4"/><rect x="12" y="11" width="1" height="1" fill="#000"/><rect x="13" y="11" width="1" height="1" fill="#fff"/><rect x="1" y="12" width="1" height="1" fill="#000"/><rect x="2" y="12" width="5" height="1" fill="#ff0000"/><rect x="7" y="12" width="2" height="1" fill="#000"/><rect x="9" y="12" width="1" height="1" fill="#fff"/><rect x="10" y="12" width="2" height="1" fill="#d4d4d4"/><rect x="12" y="12" width="1" height="1" fill="#000"/><rect x="13" y="12" width="1" height="1" fill="#fff"/><rect x="1" y="13" width="1" height="1" fill="#000"/><rect x="2" y="13" width="3" height="1" fill="#ff0000"/><rect x="5" y="13" width="3" height="1" fill="#000"/><rect x="8" y="13" width="2" height="1" fill="#fff"/><rect x="10" y="13" width="2" height="1" fill="#d4d4d4"/><rect x="12" y="13" width="1" height="1" fill="#000"/><rect x="13" y="13" width="1" height="1" fill="#fff"/><rect x="1" y="14" width="4" height="1" fill="#000"/><rect x="5" y="14" width="7" height="1" fill="#fff"/><rect x="12" y="14" width="1" height="1" fill="#000"/><rect x="13" y="14" width="1" height="1" fill="#fff"/><rect x="1" y="15" width="12" height="1" fill="#000"/><rect x="13" y="15" width="1" height="1" fill="#fff"/><rect x="2" y="16" width="12" height="1" fill="#fff"/></svg></div>
<div class="tbfield" style="left:672px;width:75px;text-align:center"><span class="b1">EXP0300</span></div>
<div class="tbfield" style="left:808px;width:200px;"><span class="b2">SUPORTE</span></div>
</div>
<div class="mdistrip"><div class="mdiicon"><svg width="13" height="13" viewBox="0 0 13 13"><rect x="0" y="0" width="13" height="13" fill="#1f7fc6"/><rect x="0.5" y="0.5" width="12" height="12" fill="none" stroke="#1766a6"/><path d="M3 8l3 0l0 3zM10 8l-3 0l0 3z" fill="#fff"/></svg></div><div class="mditext"><span>SISTEMA DE EXPORTACAO</span></div></div>
<div class="mdiline1"></div><div class="mdiline2"></div><div class="leftedge"></div>
<div class="frame"></div><div class="framegap"></div><div class="legend">Embarque</div>
<div class="form">
<div class="l" style="top:168px;width:152.91px;letter-spacing:-0.09px">Seq Embarque</div>
<div class="f" style="left:157px;top:168px;width:93px">15</div>
<div class="l" style="top:169px;width:516.93px;letter-spacing:-0.07px">Data Prevista Embarque</div>
<div class="f" style="left:521px;top:168px;width:80px;height:20px">05/02/2024</div>
<div class="l" style="top:168px;width:679px">Situação</div>
<div class="f fl dd" style="left:683px;top:168px;width:94px"><span class="ddt">Fechada</span><span class="dda"><i></i></span></div>
<div class="l" style="top:189px;width:152.83px;letter-spacing:-0.17px">Empresa</div>
<div class="f" style="left:157px;top:189px;width:40px">500</div>
<div class="f" style="left:199px;top:189px;width:40px">1</div>
<div class="f" style="left:243px;top:189px;width:358px"></div>
<div class="l" style="top:189px;width:679px">Nro Fatura</div>
<div class="f fl" style="left:683px;top:189px;width:94px">MT14</div>
<div class="l" style="top:216px;width:153.17px;letter-spacing:0.17px">Agencia</div>
<div class="f" style="left:157px;top:216px;width:40px">15</div>
<div class="f" style="left:199px;top:216px;width:40px">1</div>
<div class="f" style="left:243px;top:216px;width:80px">14</div>
<div class="f" style="left:326px;top:216px;width:451px"></div>
<div class="l" style="top:237px;width:153px">Armador</div>
<div class="f" style="left:157px;top:237px;width:40px">14</div>
<div class="f" style="left:199px;top:237px;width:40px">1</div>
<div class="f" style="left:243px;top:237px;width:80px">6</div>
<div class="f" style="left:326px;top:237px;width:451px"></div>
<div class="l" style="top:264px;width:153.12px;letter-spacing:0.12px">Via Transporte</div>
<div class="f fl dd" style="left:157px;top:264px;width:93px"><span class="ddt">Maritimo</span><span class="dda"><i></i></span></div>
<div class="l" style="top:264px;width:315px">Incoterms</div>
<div class="f" style="left:319px;top:264px;width:47px">CFR</div>
<div class="f fl fg" style="left:369px;top:264px;width:180px;letter-spacing:-0.29px">COST AND FREIGHT</div>
<div class="l" style="top:264px;width:679px">Tipo Frete Ext</div>
<div class="f fl dd" style="left:683px;top:264px;width:94px"><span class="ddt">Prepaid</span><span class="dda"><i></i></span></div>
<div class="l" style="top:285px;width:152.85px;letter-spacing:-0.15px">Porto Embarque</div>
<div class="f" style="left:157px;top:285px;width:40px">1</div>
<div class="f fl fg" style="left:199px;top:285px;width:578px">SANTOS</div>
<div class="l" style="top:306px;width:152.92px;letter-spacing:-0.08px">Porto Destino</div>
<div class="f" style="left:157px;top:307px;width:40px;height:18px">2</div>
<div class="f fl fg" style="left:199px;top:307px;width:578px;letter-spacing:-0.25px;height:18px">HONG KONG</div>
<div class="l" style="top:335px;width:153px">Navio</div>
<div class="f" style="left:157px;top:335px;width:40px">1</div>
<div class="f fl fg" style="left:199px;top:335px;width:224px;letter-spacing:-0.53px">COSCO SHIPPING SEINE</div>
<div class="l" style="top:334px;width:506px">Viagem</div>
<div class="f fl" style="left:510px;top:335px;width:91px">VG0200</div>
<div class="l" style="top:356px;width:153px">E.T.A</div>
<div class="f" style="left:157px;top:356px;width:80px">10/02/2024</div>
<div class="l" style="top:356px;width:339px">E.T.D.</div>
<div class="f" style="left:343px;top:356px;width:80px">11/02/2024</div>
<div class="l" style="top:356px;width:506px">Ttime</div>
<div class="f" style="left:510px;top:356px;width:40px">40</div>
<div class="l" style="top:384px;width:153px">Tipo Container</div>
<div class="f" style="left:157px;top:384px;width:40px">9</div>
<div class="f fl fg" style="left:199px;top:384px;width:224px;letter-spacing:-0.15px">40 DRY HC</div>
<div class="l" style="top:384px;width:506px">Nro Container</div>
<div class="f fl" style="left:510px;top:384px;width:91px;letter-spacing:-0.3px">MSCK-981</div>
<div class="l" style="top:404px;width:153.19px;letter-spacing:0.19px">Lacre Sif</div>
<div class="f fl" style="left:157px;top:404px;width:106px">123</div>
<div class="l" style="top:404px;width:343px">Dat Deadline MA</div>
<div class="f" style="left:343px;top:404px;width:80px"></div>
<div class="l" style="top:404px;width:506.20px;letter-spacing:0.2px">Des Reserva</div>
<div class="f" style="left:510px;top:404px;width:267px"></div>
<div class="l" style="top:424px;width:153.33px;letter-spacing:0.33px">Lacre Agencia</div>
<div class="f fl" style="left:157px;top:424px;width:106px">321</div>
<div class="l" style="top:424px;width:343px">Deadline  Docto</div>
<div class="f" style="left:343px;top:424px;width:80px"></div>
<div class="l" style="top:424px;width:506px">Des Retorno</div>
<div class="f" style="left:510px;top:424px;width:267px"></div>
<div class="l" style="top:445px;width:153.14px;letter-spacing:0.14px">Lacre Fiscal</div>
<div class="f fl" style="left:157px;top:445px;width:106px">432</div>
<div class="l" style="top:445px;width:342.86px;letter-spacing:-0.14px">Dat Deadline</div>
<div class="f" style="left:343px;top:445px;width:80px"></div>
<div class="l" style="top:445px;width:506.10px;letter-spacing:0.1px">Aceita BL House</div>
<div class="f fl dd" style="left:510px;top:445px;width:47px"><span class="ddt">Nao</span><span class="dda"><i></i></span></div>
<div class="l" style="top:474px;width:153px">Produto BL</div>
<div class="f fl" style="left:157px;top:474px;width:620px;letter-spacing:-0.45px;padding-top:2px">FOOD FROZEN</div>
<div class="l" style="top:502px;width:152.83px;letter-spacing:-0.17px">Codigo Ivm</div>
<div class="f" style="left:157px;top:503px;width:40px">2</div>
<div class="f fl fg" style="left:199px;top:503px;width:60px">DOLAR</div>
<div class="l" style="top:502px;width:343.06px;letter-spacing:0.06px">Vlr. Frete Externo</div>
<div class="f" style="left:343px;top:503px;width:94px"></div>
<div class="l" style="top:502px;width:517.17px;letter-spacing:0.17px">Vlr Seguro</div>
<div class="f" style="left:521px;top:503px;width:92px"></div>
<div class="l" style="top:502px;width:679.18px;letter-spacing:0.18px">Vlr Desconto</div>
<div class="f" style="left:683px;top:503px;width:94px"></div>
<div class="l" style="top:524px;width:153.19px;letter-spacing:0.19px">Vlr Taxa Moeda</div>
<div class="f" style="left:157px;top:524px;width:93px"></div>
<div class="l" style="top:524px;width:338.88px;letter-spacing:-0.12px">Data Embarque</div>
<div class="f" style="left:343px;top:524px;width:80px"></div>
<div class="l" style="top:524px;width:516.93px;letter-spacing:-0.07px">Data Faturamento</div>
<div class="f" style="left:521px;top:524px;width:80px"></div>
<div class="l" style="top:524px;width:679.20px;letter-spacing:0.2px">Processo</div>
<div class="f" style="left:683px;top:524px;width:94px"></div>
<div class="btn" style="left:840px;top:168px">Pedido</div>
<div class="btn" style="left:840px;top:197px">Fechar</div>
<div class="ubtn" style="left:926px;top:197px"><svg width="15" height="12" viewBox="0 0 15 12" shape-rendering="crispEdges"><rect x="7" y="3" width="4" height="1" fill="#000080"/><rect x="1" y="4" width="1" height="1" fill="#000080"/><rect x="5" y="4" width="2" height="1" fill="#000080"/><rect x="11" y="4" width="1" height="1" fill="#000080"/><rect x="1" y="5" width="2" height="1" fill="#000080"/><rect x="4" y="5" width="1" height="1" fill="#000080"/><rect x="12" y="5" width="1" height="1" fill="#000080"/><rect x="1" y="6" width="3" height="1" fill="#000080"/><rect x="12" y="6" width="1" height="1" fill="#000080"/><rect x="1" y="7" width="4" height="1" fill="#000080"/><rect x="12" y="7" width="1" height="1" fill="#000080"/><rect x="1" y="8" width="5" height="1" fill="#000080"/><rect x="11" y="8" width="1" height="1" fill="#000080"/><rect x="11" y="9" width="1" height="1" fill="#000080"/></svg></div>
<div class="btn" style="left:840px;top:225px">Encerrar</div>
<div class="ubtn" style="left:926px;top:225px"><svg width="15" height="12" viewBox="0 0 15 12" shape-rendering="crispEdges"><rect x="7" y="3" width="4" height="1" fill="#000080"/><rect x="1" y="4" width="1" height="1" fill="#000080"/><rect x="5" y="4" width="2" height="1" fill="#000080"/><rect x="11" y="4" width="1" height="1" fill="#000080"/><rect x="1" y="5" width="2" height="1" fill="#000080"/><rect x="4" y="5" width="1" height="1" fill="#000080"/><rect x="12" y="5" width="1" height="1" fill="#000080"/><rect x="1" y="6" width="3" height="1" fill="#000080"/><rect x="12" y="6" width="1" height="1" fill="#000080"/><rect x="1" y="7" width="4" height="1" fill="#000080"/><rect x="12" y="7" width="1" height="1" fill="#000080"/><rect x="1" y="8" width="5" height="1" fill="#000080"/><rect x="11" y="8" width="1" height="1" fill="#000080"/><rect x="11" y="9" width="1" height="1" fill="#000080"/></svg></div>
<div class="btn" style="left:840px;top:253px">Cancelar</div>
<div class="btn" style="left:840px;top:281px">Faturamento</div>
<div class="ubtn" style="left:926px;top:281px"><svg width="15" height="12" viewBox="0 0 15 12" shape-rendering="crispEdges"><rect x="7" y="3" width="4" height="1" fill="#000080"/><rect x="1" y="4" width="1" height="1" fill="#000080"/><rect x="5" y="4" width="2" height="1" fill="#000080"/><rect x="11" y="4" width="1" height="1" fill="#000080"/><rect x="1" y="5" width="2" height="1" fill="#000080"/><rect x="4" y="5" width="1" height="1" fill="#000080"/><rect x="12" y="5" width="1" height="1" fill="#000080"/><rect x="1" y="6" width="3" height="1" fill="#000080"/><rect x="12" y="6" width="1" height="1" fill="#000080"/><rect x="1" y="7" width="4" height="1" fill="#000080"/><rect x="12" y="7" width="1" height="1" fill="#000080"/><rect x="1" y="8" width="5" height="1" fill="#000080"/><rect x="11" y="8" width="1" height="1" fill="#000080"/><rect x="11" y="9" width="1" height="1" fill="#000080"/></svg></div>
</div>
<div class="dlg">
<div class="dtitle"><span class="dicon"><svg width="13" height="16" viewBox="0 0 13 16"><path d="M0.5 0.5h7l4.5 4.5v9.5h-11.5z" fill="#3f9ada" stroke="#2c7cbc" stroke-width="1"/><path d="M7.5 0.5v4.5h4.5" fill="#2c82c5" stroke="#3f9ada" stroke-width="1"/><circle cx="3.9" cy="10" r="2.2" fill="none" stroke="#fff" stroke-width="1.5" stroke-dasharray="1.15 0.58"/><path d="M6.8 7.4l4 2.6l-4 2.6z" fill="#fff"/></svg></span><span class="dtt">Encerrar</span></div>
<div class="dl">Data Embarque</div>
<div class="f dfield"><span class="sel">05/02/2024</span></div>
<div class="db" style="left:352px;width:25px"><svg style="overflow:visible" width="23" height="21" viewBox="0 0 23 21"><path transform="translate(-1,0)" d="M1.5 11L8 16.3L20.1 0L21.3 0.7L10.8 18.9H6.4L-0.2 12.1z" fill="#000"/></svg></div>
<div class="db" style="left:394px"><svg width="19" height="20" viewBox="0 0 19 20" shape-rendering="crispEdges"><rect x="1" y="1" width="12" height="1" fill="#000"/><rect x="1" y="2" width="1" height="1" fill="#000"/><rect x="2" y="2" width="6" height="1" fill="#ff0000"/><rect x="8" y="2" width="1" height="1" fill="#000"/><rect x="9" y="2" width="1" height="1" fill="#fff"/><rect x="10" y="2" width="2" height="1" fill="#d4d4d4"/><rect x="12" y="2" width="1" height="1" fill="#000"/><rect x="13" y="2" width="1" height="1" fill="#fff"/><rect x="1" y="3" width="1" height="1" fill="#000"/><rect x="2" y="3" width="6" height="1" fill="#ff0000"/><rect x="8" y="3" width="1" height="1" fill="#000"/><rect x="9" y="3" width="1" height="1" fill="#fff"/><rect x="10" y="3" width="2" height="1" fill="#d4d4d4"/><rect x="12" y="3" width="1" height="1" fill="#000"/><rect x="13" y="3" width="1" height="1" fill="#fff"/><rect x="1" y="4" width="1" height="1" fill="#000"/><rect x="2" y="4" width="6" height="1" fill="#ff0000"/><rect x="8" y="4" width="1" height="1" fill="#000"/><rect x="9" y="4" width="1" height="1" fill="#fff"/><rect x="10" y="4" width="2" height="1" fill="#d4d4d4"/><rect x="12" y="4" width="1" height="1" fill="#000"/><rect x="13" y="4" width="1" height="1" fill="#fff"/><rect x="1" y="5" width="1" height="1" fill="#ffff00"/><rect x="2" y="5" width="6" height="1" fill="#ff0000"/><rect x="8" y="5" width="1" height="1" fill="#000"/><rect x="9" y="5" width="1" height="1" fill="#fff"/><rect x="10" y="5" width="2" height="1" fill="#d4d4d4"/><rect x="12" y="5" width="1" height="1" fill="#000"/><rect x="13" y="5" width="1" height="1" fill="#fff"/><rect x="1" y="6" width="1" height="1" fill="#000"/><rect x="2" y="6" width="4" height="1" fill="#ff0000"/><rect x="6" y="6" width="1" height="1" fill="#ffff00"/><rect x="7" y="6" width="1" height="1" fill="#ff0000"/><rect x="8" y="6" width="1" height="1" fill="#000"/><rect x="9" y="6" width="1" height="1" fill="#fff"/><rect x="10" y="6" width="2" height="1" fill="#d4d4d4"/><rect x="12" y="6" width="1" height="1" fill="#000"/><rect x="13" y="6" width="1" height="1" fill="#fff"/><rect x="1" y="7" width="1" height="1" fill="#000"/><rect x="2" y="7" width="6" height="1" fill="#ff0000"/><rect x="8" y="7" width="1" height="1" fill="#000"/><rect x="9" y="7" width="1" height="1" fill="#fff"/><rect x="10" y="7" width="2" height="1" fill="#d4d4d4"/><rect x="12" y="7" width="1" height="1" fill="#000"/><rect x="13" y="7" width="1" height="1" fill="#fff"/><rect x="1" y="8" width="1" height="1" fill="#000"/><rect x="2" y="8" width="6" height="1" fill="#ff0000"/><rect x="8" y="8" width="1" height="1" fill="#000"/><rect x="9" y="8" width="1" height="1" fill="#fff"/><rect x="10" y="8" width="2" height="1" fill="#d4d4d4"/><rect x="12" y="8" width="1" height="1" fill="#000"/><rect x="13" y="8" width="1" height="1" fill="#fff"/><rect x="1" y="9" width="1" height="1" fill="#ffff00"/><rect x="2" y="9" width="6" height="1" fill="#ff0000"/><rect x="8" y="9" width="1" height="1" fill="#000"/><rect x="9" y="9" width="1" height="1" fill="#fff"/><rect x="10" y="9" width="2" height="1" fill="#d4d4d4"/><rect x="12" y="9" width="1" height="1" fill="#000"/><rect x="13" y="9" width="1" height="1" fill="#fff"/><rect x="1" y="10" width="1" height="1" fill="#000"/><rect x="2" y="10" width="6" height="1" fill="#ff0000"/><rect x="8" y="10" width="1" height="1" fill="#000"/><rect x="9" y="10" width="1" height="1" fill="#fff"/><rect x="10" y="10" width="2" height="1" fill="#d4d4d4"/><rect x="12" y="10" width="1" height="1" fill="#000"/><rect x="13" y="10" width="1" height="1" fill="#fff"/><rect x="1" y="11" width="1" height="1" fill="#000"/><rect x="2" y="11" width="6" height="1" fill="#ff0000"/><rect x="8" y="11" width="1" height="1" fill="#000"/><rect x="9" y="11" width="1" height="1" fill="#fff"/><rect x="10" y="11" width="2" height="1" fill="#d4d4d4"/><rect x="12" y="11" width="1" height="1" fill="#000"/><rect x="13" y="11" width="1" height="1" fill="#fff"/><rect x="1" y="12" width="1" height="1" fill="#000"/><rect x="2" y="12" width="5" height="1" fill="#ff0000"/><rect x="7" y="12" width="2" height="1" fill="#000"/><rect x="9" y="12" width="1" height="1" fill="#fff"/><rect x="10" y="12" width="2" height="1" fill="#d4d4d4"/><rect x="12" y="12" width="1" height="1" fill="#000"/><rect x="13" y="12" width="1" height="1" fill="#fff"/><rect x="1" y="13" width="1" height="1" fill="#000"/><rect x="2" y="13" width="3" height="1" fill="#ff0000"/><rect x="5" y="13" width="3" height="1" fill="#000"/><rect x="8" y="13" width="2" height="1" fill="#fff"/><rect x="10" y="13" width="2" height="1" fill="#d4d4d4"/><rect x="12" y="13" width="1" height="1" fill="#000"/><rect x="13" y="13" width="1" height="1" fill="#fff"/><rect x="1" y="14" width="4" height="1" fill="#000"/><rect x="5" y="14" width="7" height="1" fill="#fff"/><rect x="12" y="14" width="1" height="1" fill="#000"/><rect x="13" y="14" width="1" height="1" fill="#fff"/><rect x="1" y="15" width="12" height="1" fill="#000"/><rect x="13" y="15" width="1" height="1" fill="#fff"/><rect x="2" y="16" width="12" height="1" fill="#fff"/></svg></div>
</div>
<div class="red" style="left:902px;top:458px;width:45px;height:32px"></div>
<div class="tabwhite"></div><div class="tabline"></div><div class="status"></div>
<div class="tab tsel" style="left:2px">Embarque</div>
<div class="tab" style="left:84px">Pessoas</div>
<div class="tab" style="left:165px">Produtos</div>
<div class="tab" style="left:246px">Observacoes</div>
<div class="tab" style="left:327px">Obs Docto</div>
<div class="red" style="left:2px;top:651px;width:71px;height:25px"></div>
</body>
</html>
